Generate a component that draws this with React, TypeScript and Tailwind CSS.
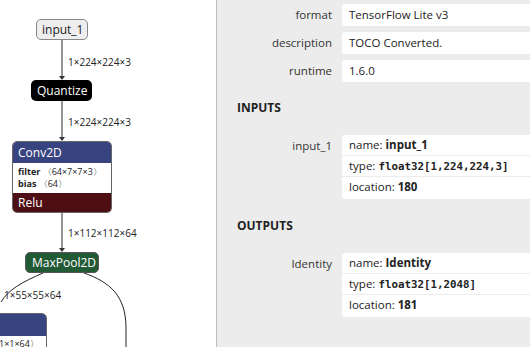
import React from "react";

const Row = ({ label, children }: { label: string; children: React.ReactNode }) => (
  <div className="flex items-start">
    <div className="w-[115px] shrink-0 pt-[3px] text-right text-[11.5px] leading-[16px] text-[#333]">{label}</div>
    <div className="ml-[10px] w-[220px] shrink-0">{children}</div>
  </div>
);

const Value = ({ children }: { children: React.ReactNode }) => (
  <div className="h-[22px] rounded-[3px] bg-white pl-[7px] pt-[3px] text-[11.5px] leading-[16px] text-[#222]">{children}</div>
);

const Arg = ({ name, type, loc }: { name: string; type: string; loc: string }) => (
  <div className="rounded-[3px] bg-white text-[11.5px] leading-[16px] text-[#222]">
    <div className="h-[21px] border-b border-[#ececec] pl-[7px] pt-[2px]">
      name: <b>{name}</b>
    </div>
    <div className="h-[21px] border-b border-[#ececec] pl-[7px] pt-[2px]">
      type: <b className="font-['DejaVu_Sans_Mono',monospace] text-[10.8px]">{type}</b>
    </div>
    <div className="h-[22px] pl-[7px] pt-[2px]">
      location: <b>{loc}</b>
    </div>
  </div>
);

function Graph() {
  return (
    <div className="relative h-[347px] w-[216px] shrink-0 overflow-hidden bg-white text-[#222]">
      <svg className="absolute inset-0" width="216" height="347">
        <g stroke="#666" strokeWidth="1.4" fill="none">
          <path d="M62 40 L62 77" />
          <path d="M62 101 L62 138" />
          <path d="M62 212 L62 249" />
        </g>
        <g fill="#333">
          <polygon points="59,76 65,76 62,80" />
          <polygon points="59,137 65,137 62,141" />
          <polygon points="59,248 65,248 62,252" />
        </g>
        <g stroke="#222" strokeWidth="1" fill="none">
          <path d="M43 273 C 22 282, 8 290, 1 302" />
          <path d="M84 273 C 110 282, 126 296, 126 328 L126 347" />
        </g>
      </svg>

      {/* edge labels */}
      <div className="absolute left-[68px] top-[55px] text-[10px] leading-[14px]">1×224×224×3</div>
      <div className="absolute left-[68px] top-[115px] text-[10px] leading-[14px]">1×224×224×3</div>
      <div className="absolute left-[68px] top-[226px] text-[10px] leading-[14px]">1×112×112×64</div>
      <div className="absolute left-[4px] top-[288px] text-[10px] leading-[14px]">1×55×55×64</div>

      {/* input_1 */}
      <div className="absolute left-[36px] top-[19px] flex h-[21px] w-[52px] items-center rounded-[5px] border border-[#888] bg-[#eee] pl-[5px] text-[12px] text-[#222]">
        input_1
      </div>

      {/* Quantize */}
      <div className="absolute left-[31px] top-[80px] flex h-[21px] w-[61px] items-center rounded-[5px] bg-black pl-[6px] text-[12px] text-white">
        Quantize
      </div>

      {/* Conv2D */}
      <div className="absolute left-[12px] top-[141px] w-[100px] overflow-hidden rounded-[5px] border border-[#666]">
        <div className="flex h-[21px] items-center bg-[#37447f] pl-[5px] text-[12px] text-white">Conv2D</div>
        <div className="flex h-[30px] flex-col justify-center bg-white pl-[5px] text-[9px] text-[#222]">
          <div className="h-[12px] leading-[12px]">
            <b>filter</b> 〈64×7×7×3〉
          </div>
          <div className="h-[12px] leading-[12px]">
            <b>bias</b> 〈64〉
          </div>
        </div>
        <div className="flex h-[19px] items-center bg-[#4e0f14] pl-[5px] text-[12px] text-white">Relu</div>
      </div>

      {/* MaxPool2D */}
      <div className="absolute left-[25px] top-[252px] flex h-[21px] w-[74px] items-center rounded-[5px] border border-[#555] bg-[#225a35] pl-[6px] text-[12px] text-white">
        MaxPool2D
      </div>

      {/* partial node */}
      <div className="absolute left-[-60px] top-[313px] w-[107px] overflow-hidden rounded-[5px] border border-[#666]">
        <div className="h-[22px] bg-[#37447f]" />
        <div className="h-[20px] bg-white pl-[58px] pt-[1px] text-[9px] text-[#222]">1×1×64〉</div>
      </div>
    </div>
  );
}

export default function App() {
  return (
    <div className="flex h-[347px] w-[530px] overflow-hidden font-['Open_Sans',sans-serif]">
      <Graph />
      <div className="flex-1 overflow-hidden border-l border-[#bdbdbd] bg-[#ececec] pt-[4px]">
        <div className="flex flex-col gap-[6px]">
          <Row label="format">
            <Value>TensorFlow Lite v3</Value>
          </Row>
          <Row label="description">
            <Value>TOCO Converted.</Value>
          </Row>
          <Row label="runtime">
            <Value>1.6.0</Value>
          </Row>
        </div>

        <div className="mt-[19px] h-[14px] pl-[20px] text-[12px] font-bold leading-[14px] text-[#222]">INPUTS</div>
        <div className="mt-[20px]">
          <Row label="input_1">
            <Arg name="input_1" type="float32[1,224,224,3]" loc="180" />
          </Row>
        </div>

        <div className="mt-[20px] h-[14px] pl-[20px] text-[12px] font-bold leading-[14px] text-[#222]">OUTPUTS</div>
        <div className="mt-[20px]">
          <Row label="Identity">
            <Arg name="Identity" type="float32[1,2048]" loc="181" />
          </Row>
        </div>
      </div>
    </div>
  );
}
